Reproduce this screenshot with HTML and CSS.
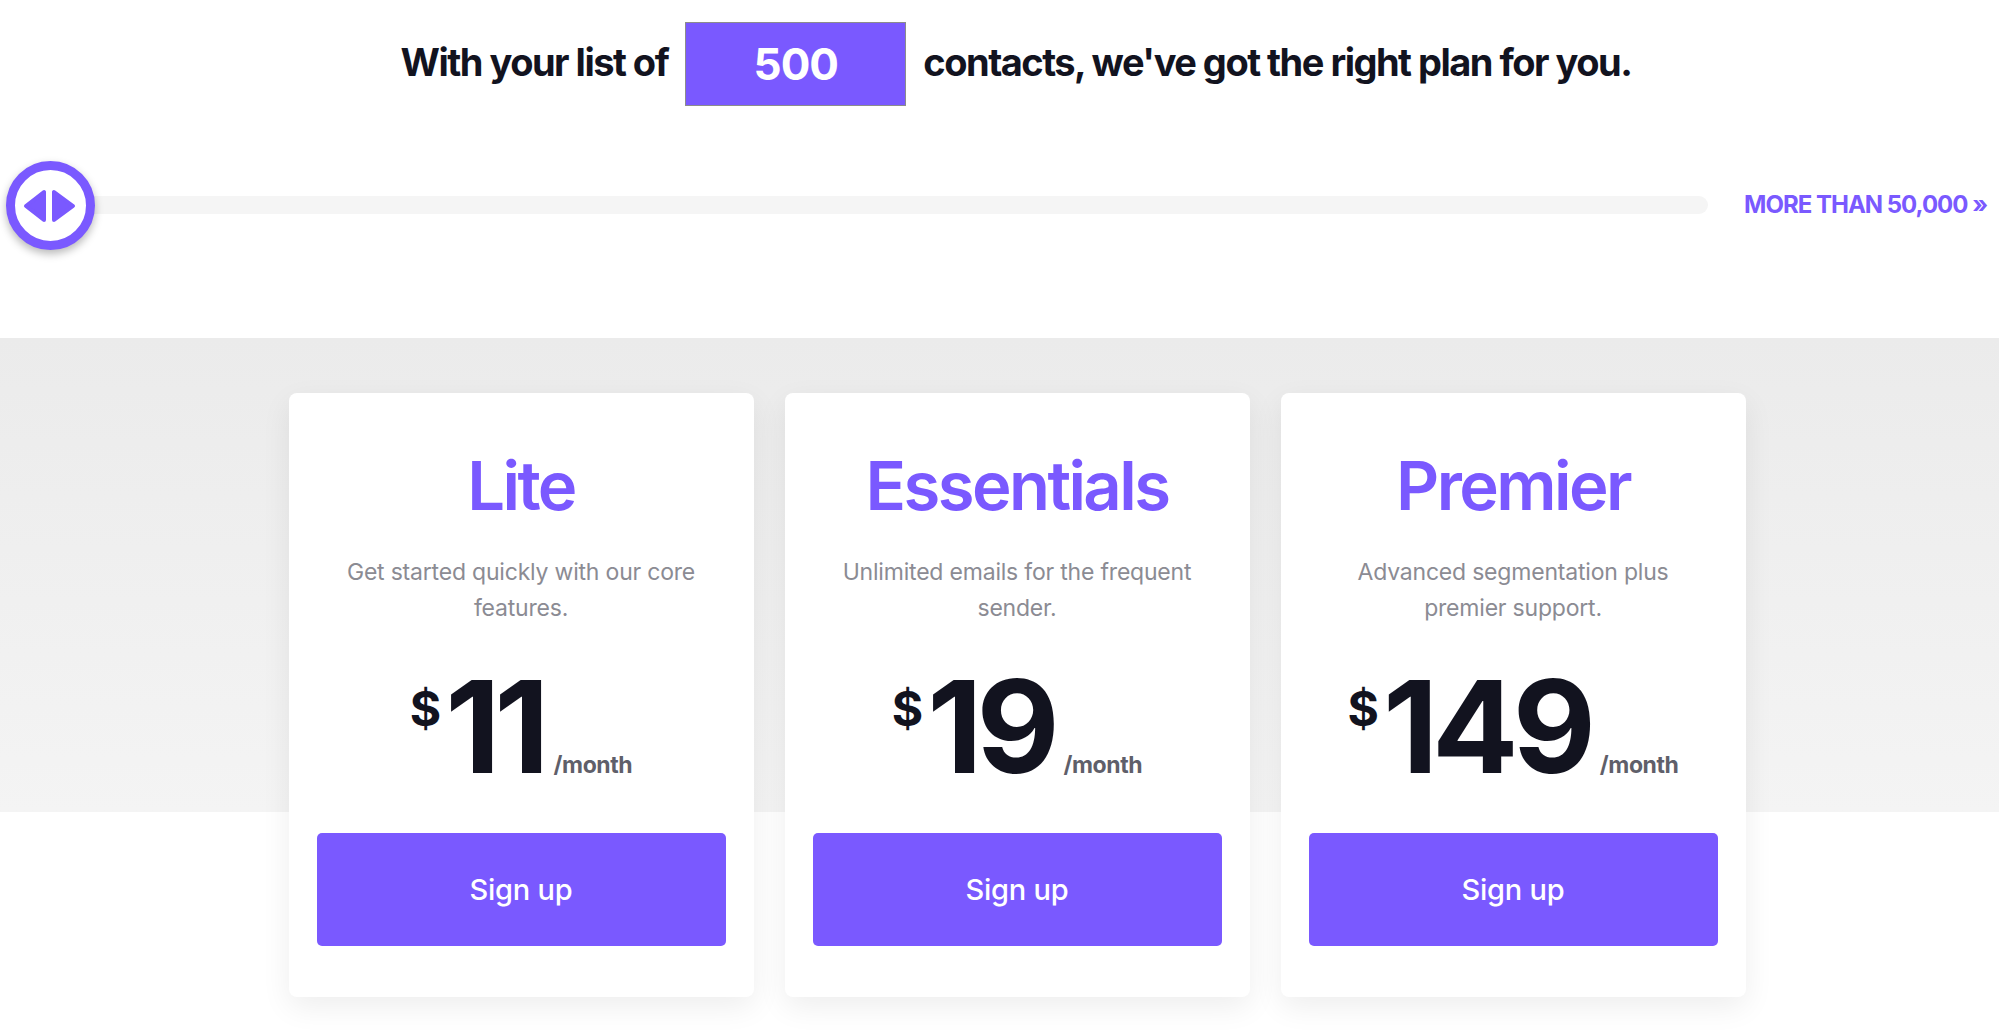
FILE: index.html
```html
<!DOCTYPE html>
<html>
<head>
	<meta charset="utf-8">
	<title>Pricing</title>
	<link rel="stylesheet" href="styles.css">
</head>
<body>
	<div class="intro">
		<span>With your list of</span>
		<input class="count" type="text" value="500">
		<span>contacts, we've got the right plan for you.</span>
	</div>

	<div class="slider">
		<div class="track">
			<div class="handle">
				<svg width="71" height="71" viewBox="0 0 71 71">
					<polygon points="11,36 29,22 29,50" />
					<polygon points="39,22 39,50 58,36" />
				</svg>
			</div>
		</div>
		<a class="more" href="#">MORE THAN 50,000 &raquo;</a>
	</div>

	<div class="plans">
		<div class="card">
			<h2>Lite</h2>
			<p class="desc">Get started quickly with our core features.</p>
			<div class="price"><span class="cur">$</span><span class="amount">11</span><span class="per">/month</span></div>
			<button>Sign up</button>
		</div>
		<div class="card">
			<h2>Essentials</h2>
			<p class="desc">Unlimited emails for the frequent sender.</p>
			<div class="price"><span class="cur">$</span><span class="amount">19</span><span class="per">/month</span></div>
			<button>Sign up</button>
		</div>
		<div class="card">
			<h2>Premier</h2>
			<p class="desc">Advanced segmentation plus premier support.</p>
			<div class="price"><span class="cur">$</span><span class="amount">149</span><span class="per">/month</span></div>
			<button>Sign up</button>
		</div>
	</div>
</body>
</html>
```

FILE: styles.css
```css
body {
	margin: 0;
	background: #fff;
	color: #12131f;
	font-family: Inter, "Liberation Sans", sans-serif;
}
.intro {
	display: flex;
	justify-content: center;
	align-items: center;
	gap: 17px;
	padding: 22px 0 0 33px;
	font-size: 38px;
	font-weight: 700;
	letter-spacing: -1.5px;
}
.intro span {
	margin-top: -4px;
}
.count {
	box-sizing: border-box;
	width: 221px;
	height: 84px;
	border: 1px solid #8c8c8c;
	background: #7a59ff;
	color: #fff;
	font-family: Inter, "Liberation Sans", sans-serif;
	font-size: 44px;
	font-weight: 700;
	letter-spacing: -1px;
	text-align: center;
	padding: 0;
}
.slider {
	display: flex;
	align-items: center;
	margin-top: 54px;
	padding: 0 12px 0 6px;
	height: 89px;
}
.track {
	flex: 1;
	height: 18px;
	background: #f5f5f5;
	border-radius: 9px;
	position: relative;
}
.handle {
	position: absolute;
	left: 0;
	top: -35px;
	width: 71px;
	height: 71px;
	border: 9px solid #7a59ff;
	border-radius: 50%;
	background: #fff;
	box-shadow: 0 4px 9px rgba(0, 0, 0, 0.28);
}
.handle svg {
	display: block;
}
.handle polygon {
	fill: #7a59ff;
	stroke: #7a59ff;
	stroke-width: 4;
	stroke-linejoin: round;
}
.more {
	margin-left: 36px;
	color: #7a59ff;
	font-size: 24px;
	font-weight: 700;
	letter-spacing: -1px;
	text-decoration: none;
}
.plans {
	display: flex;
	justify-content: center;
	gap: 31px;
	margin-top: 89px;
	padding: 55px 0 39px 35px;
	background: linear-gradient(to bottom, #ebebeb 0, #f4f4f4 474px, #fff 474px);
}
.card {
	box-sizing: border-box;
	width: 465px;
	padding: 59px 28px 51px;
	background: #fff;
	border-radius: 8px;
	box-shadow: 0 10px 30px rgba(0, 0, 0, 0.07);
	text-align: center;
}
h2 {
	margin: 0;
	color: #7a59ff;
	font-size: 67px;
	font-weight: 600;
	line-height: 1;
	letter-spacing: -2.6px;
}
.desc {
	margin: 35px auto 0;
	max-width: 370px;
	color: #8b8b93;
	font-size: 23px;
	font-weight: 400;
	line-height: 36px;
	letter-spacing: -0.2px;
}
.price {
	display: flex;
	justify-content: center;
	align-items: baseline;
	margin-top: 37px;
	line-height: 1;
}
.cur {
	align-self: flex-start;
	margin: 22px 4px 0 0;
	font-size: 48px;
	font-weight: 700;
}
.amount {
	font-size: 128px;
	font-weight: 700;
	letter-spacing: -6px;
}
.per {
	margin-left: 10px;
	color: #5f5f6a;
	font-size: 23px;
	font-weight: 700;
	letter-spacing: -0.4px;
}
button {
	display: block;
	width: 100%;
	height: 113px;
	margin-top: 42px;
	border: none;
	border-radius: 5px;
	background: #7a59ff;
	color: #fff;
	font-family: Inter, "Liberation Sans", sans-serif;
	font-size: 29px;
	font-weight: 500;
	letter-spacing: -0.2px;
	cursor: pointer;
}
```
